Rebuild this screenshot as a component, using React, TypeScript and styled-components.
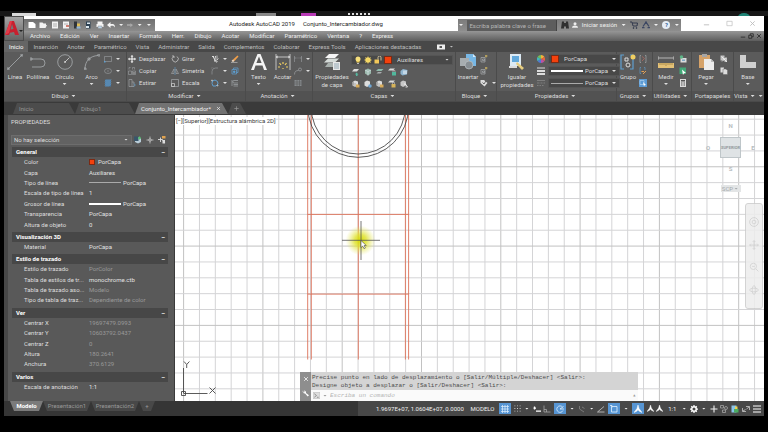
import React from 'react';
import styled, { createGlobalStyle, css } from 'styled-components';

const Global = createGlobalStyle`
  * { box-sizing: border-box; }
  body { margin: 0; background: #000; }
  body, button, input, select { font-family: Roboto, "Noto Sans", sans-serif; font-size: 6px; line-height: 8px; }
  button, input, select { margin: 0; padding: 0; border: 0; background: none; color: inherit; }
  a { color: inherit; text-decoration: none; }
  svg { display: block; flex: none; }
`;

/* ---------- icons ---------- */

const W = '#dcdcdc';
const G = '#a9adb0';
const B = '#5f9fd0';
const Y = '#f0cf62';

const glyphs: Record<string, React.ReactNode> = {
  line: <path d="M1 15L15 1M0 14h2v2H0zM14 0h2v2h-2z" stroke={G} strokeWidth=".8" fill="none" />,
  polyline: <path d="M1 5h10a3.500 3.500 0 0 1 0 8H2M0 4h2v2H0z" stroke={G} strokeWidth=".8" fill="none" />,
  circle: <g fill="none" stroke={G} strokeWidth=".8"><circle cx="8" cy="8" r="7.300" /><path d="M8 8l4.500-4.500M7 8h2M8 7v2" stroke={W} /></g>,
  arc: <g fill="none" stroke={G} strokeWidth=".8"><path d="M1 15C1 7 6 2 14 1.500" /><path d="M0 14h2v2H0zM4 4h2v2H4zM14 0h2v2h-2z" /></g>,
  rect: <g fill="none" stroke={G}><path d="M1 3h14v10H1z" /><path d="M0 12h3v3H0z" fill={B} stroke="none" /></g>,
  ellipse: <g fill="none" stroke={G}><ellipse cx="8" cy="8" rx="7" ry="5" /><path d="M7 8h2M8 7v2" /></g>,
  hatch: <g><path d="M2 1h12v14H2z" fill="#4777a0" /><path d="M2 5l4-4M2 9l8-8M2 13l12-12M4 15L14 5M8 15l6-6" stroke="#8fc0e8" /></g>,
  move: <path d="M8 0l3 3H9v4h4V5l3 3-3 3V9H9v4h2l-3 3-3-3h2V9H3v2L0 8l3-3v2h4V3H5z" fill="#fff" />,
  rotate: <g fill="none" stroke={W} strokeWidth="1.300"><path d="M5 3a6 6 0 1 0 7 0" /><path d="M2 2h4v4" /></g>,
  trim: <g stroke={W} strokeWidth="1.500" fill="none"><path d="M3 2l7 11M9 2L7 13M2 3h4" strokeWidth="2" /><path d="M12 1v9l3-3" /><circle cx="11" cy="13" r="1.500" /></g>,
  eraser: <g><path d="M13 1l2 2-8 9-3-3z" fill="#f2a04a" /><path d="M4 9l3 3-3 2-3-2z" fill="#f8dfc4" /><path d="M0 15h13" stroke={W} /></g>,
  copy: <g fill="none" stroke={G}><path d="M1 8h6v7H1zM9 8h6v7H9zM2 5V1h3M9 5V1h4v4" /><circle cx="12" cy="12" r="1" stroke={W} /></g>,
  mirror: <g fill="none" stroke={G} strokeWidth="1.200"><path d="M8 0v16" stroke={B} /><path d="M6 4v9H1zM10 4v9h5z" /></g>,
  fillet: <g fill="none" stroke={G}><path d="M2 15V9a7 7 0 0 1 7-7h5" /><path d="M1 5V1h4" stroke="#777" /></g>,
  box: <g fill="none" stroke={B} strokeWidth="1.500"><path d="M2 5h9v9H2zM5 5V2h9v9h-3" /><path d="M5 8h3v3H5z" fill={B} /></g>,
  stretch: <g fill="none" stroke={G} strokeWidth="1.200"><path d="M2 1h6v14H2zM8 6h4v9H8" /><path d="M11 9l4 3-4 3" stroke={B} /></g>,
  scale: <g fill="none" stroke={G} strokeWidth="1.300"><path d="M1 1h14v14H1z" /><path d="M1 9h6v6H1z" stroke={W} /></g>,
  array: <g fill="none" stroke={B} strokeWidth="2"><path d="M3 4l5-2 5 3 1 5-4 4H4L2 9z" /><path d="M1 2h2v2H1zM12 12h2v2h-2z" stroke={W} strokeWidth="1" /></g>,
  offset: <g fill="none" stroke={G} strokeWidth="1.300"><path d="M14 3H6a2 2 0 0 0 0 5h8M14 11H5M14 14H5M2 2v12" /></g>,
  text: <path d="M0 16L6.500 0h3L16 16h-3l-1.500-4.500h-7L3 16zM5.400 9h5.200L8 2.500z" fill="#f4f4f4" fillRule="evenodd" />,
  dim: <g fill="none" stroke={W} strokeWidth=".8"><path d="M1 0v16M15 0v16M1 3h14M3 2L1 3l2 1M13 2l2 1-2 1" /><path d="M8 8v2M4.500 9l1.500 2M11.500 9L10 11M3 13h2M11 13h2M8 14v1" stroke={Y} strokeWidth="1.200" /></g>,
  dimSmall: <path d="M1 2v12M15 2v12M1 6h4M11 6h4M7 6h2" stroke={G} fill="none" />,
  leader: <g fill="none" stroke={G} strokeWidth="1.200"><path d="M1 15C1 9 4 7 9 7" /><circle cx="12" cy="5" r="3" /></g>,
  table: <g><path d="M1 2h14v12H1z" fill="#85898c" /><path d="M1 6h14M1 10h14M6 2v12M11 2v12" stroke="#555" /></g>,
  layers: <g><path d="M5 0h10l-4 4H1z" fill="#f5f5f5" /><path d="M4 4.500h11l-4 4H0z" fill="#d6dcd9" /><path d="M4 9h8l-3 4H1z" fill="#a8b0ad" /><path d="M9 8h7v8H9z" fill="#e8e8e8" /><path d="M10 10h5M10 12h5M10 14h5" stroke="#7e9aa8" strokeWidth=".8" /></g>,
  bulb: <g><circle cx="8" cy="6" r="5" fill="#f6df7c" /><path d="M5 10h6v3H5z" fill="#e8c95a" /><path d="M6 14h4v2H6z" fill="#bbb" /></g>,
  sun: <g><circle cx="8" cy="8" r="5.500" fill="#f8df68" /><path d="M8 0v16M0 8h16M2 2l12 12M14 2L2 14" stroke="#f0cf62" /></g>,
  unlock: <g><path d="M1 7h9v8H1z" fill="#f3c85a" /><path d="M8 7V3a3 3 0 0 1 6 0v6" fill="none" stroke="#e6d6a8" strokeWidth="1.700" /></g>,
  la: <g><path d="M4 2h10l-4 5H0z" fill={W} /><path d="M9 9l4 4h-2v3H8v-3H6z" fill="#57b8a0" /></g>,
  lb: <g><path d="M2 4l6-3 6 3v7l-6 4-6-4z" fill="#9dbbae" /><path d="M2 4l6 3 6-3M8 7v8" stroke="#eef" fill="none" /></g>,
  lc: <g><path d="M4 2h11l-4 4H0z" fill="#8fb9ab" /><path d="M4 8h8l-3 3H1z" fill={G} /></g>,
  ld: <g><path d="M4 1h10l-4 4H0z" fill={W} /><path d="M8 8h8v7H8z" fill="#51b89d" /><path d="M10 8V5h4v3" stroke={W} fill="none" /></g>,
  le: <g><path d="M1 6l5-4 9 2-1 9-9 2-4-3z" fill="#8fb5d0" /><path d="M6 5h8v7H6z" fill="#c3d7e5" /></g>,
  lf: <g><path d="M1 4l5-3 6 2v8l-6 3-5-3z" fill={W} /><path d="M8 9h7v6H8z" fill="#d7ab5a" /><path d="M3 4v7M6 6v8" stroke="#777" /></g>,
  lg: <g><path d="M1 4l5-3 6 2v8l-6 3-5-3z" fill={W} /><circle cx="12" cy="12" r="3.500" fill="#70a7d5" /></g>,
  lh: <g><path d="M4 1h10l-4 4H0z" fill={W} /><path d="M7 8h8v7H7z" fill="#d7b45a" /><path d="M9 8V5h4v3" stroke={W} fill="none" /></g>,
  li: <g><path d="M1 4l5-3 6 2v8l-6 3-5-3z" fill="#c7c7c7" /><path d="M8 8h3l4 6M11 14h4" stroke="#fff" strokeWidth="1.500" fill="none" /></g>,
  insert: <g><path d="M6 0h7l3 3v9H6z" fill="#77b7e5" /><path d="M13 0v3h3z" fill="#d5ebfa" /><path d="M0 4h9v8H0z" fill="#a7adb0" /><circle cx="9" cy="11" r="4" fill="#878e93" stroke="#c3c9cd" strokeWidth=".6" /></g>,
  blk: <g fill="none" stroke={G} strokeWidth="1.400"><path d="M2 5h8v9H2zM5 8h4v3H5z" /><path d="M10 2h5M12 0v5" stroke={Y} /></g>,
  tag: <g fill={W}><path d="M1 2h7l7 6-6 7-8-7z" /><path d="M5 7l3 3 5-8" stroke="#666" strokeWidth="2" fill="none" /></g>,
  match: <g><path d="M1 0h11v12H1z" fill="#dceaf4" /><path d="M3 2h7v6H3z" fill="#61a8db" /><path d="M0 12h8v2H0z" fill={W} /><path d="M8 8l7 6-2 2-6-6z" fill="#e6cd7f" /></g>,
  wheel: <g><path d="M8 8V0a8 8 0 0 1 7 4z" fill="#f3b13b" /><path d="M8 8l7-4a8 8 0 0 1 0 8z" fill="#e8663e" /><path d="M8 8l7 4a8 8 0 0 1-7 4z" fill="#bd53a5" /><path d="M8 8v8a8 8 0 0 1-7-4z" fill="#4e79d5" /><path d="M8 8l-7 4a8 8 0 0 1 0-8z" fill="#43b6bd" /><path d="M8 8L1 4a8 8 0 0 1 7-4z" fill="#74c05a" /></g>,
  weights: <path d="M0 1h16v2H0zM0 6h16v4H0zM0 12h16v4H0z" fill={W} />,
  types: <path d="M0 3h16M0 8h5M7 8h4M13 8h3M0 13h3M5 13h3M10 13h3" stroke="#898989" strokeWidth="1.500" />,
  group: <g fill="none"><path d="M4 1H1v14h3M10 1h3v14h-3" stroke={B} strokeWidth="1.200" /><path d="M5 4h3v3H5z" stroke={W} /><circle cx="8" cy="11" r="2" stroke={W} /><circle cx="13" cy="3" r="2.500" fill={Y} /></g>,
  ungroup: <g fill="none" strokeWidth="1.300"><path d="M4 1H2v14h2M12 1h2v14h-2" stroke={G} /><path d="M6 3l5 4-5 5" stroke="#c36b61" /></g>,
  gedit: <g fill="none" strokeWidth="1.300"><path d="M4 1H2v12h2M10 1h2v5" stroke={B} /><path d="M5 9h5M8 14l6-6" stroke="#e4a155" strokeWidth="2" /></g>,
  gsel: <g><path d="M0 0h16v16H0z" fill="#5c9bd5" /><path d="M2 3h8v8H2z" fill="none" stroke="#cde4f7" /><path d="M8 6l6 6-3 .300L10 15z" fill="#fff" /></g>,
  measure: <g><path d="M0 2v4M16 2v4M0 4h16" stroke={W} strokeWidth=".7" /><path d="M0 9h16v5H0z" fill="#e4c176" /><path d="M2 9v2M4 9v2M6 9v2M8 9v3M10 9v2M12 9v2M14 9v2" stroke="#8a6f38" strokeWidth=".6" /></g>,
  u1: <g><path d="M3 6h12v9H3z" fill={W} /><circle cx="5" cy="4" r="3.500" fill="#5db487" /><path d="M6 9h6v3H6z" fill="#7fa8c4" /></g>,
  u2: <g><path d="M1 1h13v13H1z" fill="#43a878" /><path d="M6 5l8 7-4 .500L8 16z" fill="#fff" /></g>,
  calc: <g><path d="M2 0h12v16H2z" fill={W} /><path d="M4 2h8v3H4zM4 7h2v2H4zM7 7h2v2H7zM10 7h2v2h-2zM4 11h2v2H4zM7 11h2v2H7zM10 11h2v2h-2z" fill="#555" /></g>,
  paste: <g><path d="M1 1h11v13H1z" fill="#d5a269" /><path d="M4 0h5v3H4z" fill="#a6a6a6" /><path d="M6 5h7l3 3v8H6z" fill="#ececec" /><path d="M13 5v3h3z" fill="#bcbcbc" /></g>,
  cut: <g><path d="M1 1h8v10H1zM9 6h5v8H9z" fill="#c2c2c2" /><path d="M3 3l11 11M13 4L4 13" stroke="#fff" strokeWidth="1.300" /></g>,
  clip: <g fill={W}><path d="M1 1h7v10H1z" /><path d="M6 4h6l3 3v8H6z" stroke="#666" /></g>,
  base: <path d="M0 1h6v7h10v6H0z" fill="#cfcfcf" />,
  newDoc: <path d="M1 2h9l5 4v8H1z" fill="#fff" />,
  open: <path d="M1 3h6l2 2h5v3l2 0-3 6H1z" fill="#f3f3f3" />,
  save: <g><path d="M2 1h12v14H2z" fill="#f3f3f3" /><path d="M4 6h8M4 10h8" stroke="#999" strokeWidth="1.500" /></g>,
  saveAs: <g><path d="M2 1h12v14H2z" fill="#f3f3f3" /><path d="M4 6h8" stroke="#999" strokeWidth="1.500" /><path d="M8 10h6" stroke="#c75849" strokeWidth="3" /></g>,
  cloud: <g><path d="M2 1h6v14H2z" fill="#30343a" /><path d="M8 5h6v6H8z" fill="#e0bd55" /><path d="M7 11h8v4H7z" fill="#8fb4d8" /></g>,
  cloudUp: <g><path d="M4 1h9v14H4z" fill="#2c4053" /><path d="M6 3h6v3H6zM4 10h6v4H4z" fill="#dbe7ef" /></g>,
  print: <g><path d="M3 1h10v5H3zM1 6h14v6H1z" fill="#f4f4f4" /><path d="M4 10h8v5H4z" fill="#bed4e7" stroke="#888" /></g>,
  undo: <path d="M0 8l7-6v4h5c3 1 4 3 4 7-2-3-4-4-9-3v4z" fill="#f4f4f4" />,
  redo: <path d="M16 8L9 3v3H0v4h9v4z" fill="#aaa" />,
  binoc: <path d="M2 1h4v3h4V1h4l2 14h-6v-4H6v4H0z" fill="#303030" />,
  user: <g fill="#eee"><circle cx="8" cy="4.500" r="4" /><path d="M0 15c0-8 16-8 16 0z" /></g>,
  cart: <g fill="none" stroke="#32394d" strokeWidth="2"><path d="M0 2h4l2 8h8l1-6H5" /><circle cx="7" cy="14" r="1" /><circle cx="13" cy="14" r="1" /></g>,
  share: <path d="M8 2L2 11M8 2l6 9M0 13h5M11 13h5M6 2h4" stroke="#3c4763" strokeWidth="2.500" fill="none" />,
  addSel: <g><path d="M2 5l6-3 6 3v7l-6 3-6-3z" fill="#b8ccd8" /><path d="M0 1h9v9H0z" fill="#39566b" /><path d="M8 4h6M11 1v6" stroke="#5ac074" strokeWidth="2.500" /></g>,
  pick: <path d="M8 1v5M8 10v5M1 8h5M10 8h5M6 6h4v4H6z" stroke={W} fill="none" strokeWidth="1.300" />,
  quick: <g><path d="M0 7h9M5 3v9M7 6l7 8" stroke={W} strokeWidth="1.800" /><path d="M8 0h7v5H8z" fill="#e0a350" /><path d="M9 8h5v7H9z" fill="#ddd" /></g>,
  sgrid: <path d="M0 3h16M0 8h16M0 13h16M3 0v16M8 0v16M13 0v16" stroke="#d9ebfb" strokeWidth="1.500" />,
  sdots: <g fill={W}><path d="M1 1h2v2H1zM7 1h2v2H7zM13 1h2v2h-2zM1 7h2v2H1zM7 7h2v2H7zM13 7h2v2h-2zM1 13h2v2H1zM7 13h2v2H7zM13 13h2v2h-2z" /></g>,
  sdyn: <path d="M1 6h5M3 3v6M6 12h10" stroke="#fff" strokeWidth="2.500" />,
  sortho: <path d="M2 1v13h13M2 9h5v5" stroke="#aaa" strokeWidth="1.500" fill="none" />,
  spolar: <g stroke="#e2f1ff" strokeWidth="1.600" fill="none"><path d="M13 4a6.500 6.500 0 1 0 1 7M8 8l7-5M8 8h8" /></g>,
  siso: <path d="M3 2v6l9 6M8 4l5 3" stroke="#888" strokeWidth="1.500" fill="none" />,
  sangle: <path d="M1 14L14 3M1 14h14" stroke="#ccc" strokeWidth="1.600" />,
  sosnap: <g fill="none" stroke="#e2f1ff" strokeWidth="1.600"><path d="M3 3h11v11H3z" /><path d="M0 1h4v4" /></g>,
  sann: <path d="M8 0l2 7 6 8-6-3-2-3-2 3-6 3 6-8z" fill="#fff" stroke="#fff" />,
  gear: <g><circle cx="8" cy="8" r="4.500" fill="none" stroke="#fff" strokeWidth="3" /><path d="M8 0v3M8 13v3M0 8h3M13 8h3M2.500 2.500l2 2M11.500 11.500l2 2M13.500 2.500l-2 2M4.500 11.500l-2 2" stroke="#fff" strokeWidth="2.500" /></g>,
  plus: <path d="M8 1v14M1 8h14" stroke="currentColor" strokeWidth="2.200" />,
  isolate: <g fill="none" stroke="#aaa" strokeWidth="1.500"><path d="M1 1h6v5H1z" /><circle cx="12" cy="6" r="3" /><path d="M5 10h6v5H5z" /></g>,
  perf: <g><path d="M1 1h10v14H1z" fill="#8ac5e8" /><path d="M6 8h9v7H6z" fill="#4bad62" /><path d="M8 3h5v5H8z" fill="#f0d14e" /></g>,
  full: <path d="M1 13V6M1 13h7M15 3v7M15 3H8M9 8l5-4M7 9l-5 3" stroke={W} strokeWidth="1.400" fill="none" />,
  burger: <path d="M0 2h16M0 8h16M0 14h16" stroke="#fff" strokeWidth="2" />,
  close: <path d="M3 3l10 10M13 3L3 13" stroke="currentColor" strokeWidth="2" />,
  minimize: <path d="M2 11h12" stroke="currentColor" strokeWidth="2" />,
  maximize: <path d="M2 3h12v10H2z" stroke="currentColor" strokeWidth="1.500" fill="none" />,
  restore: <path d="M2 6h8v8H2zM6 6V2h8v8h-4" stroke="currentColor" strokeWidth="2" fill="none" />,
  wrench: <path d="M2 1a5 5 0 0 0 5 7l6 7 3-3-7-5a5 5 0 0 0-5-6l2 3-2 2z" fill="#fff" />,
  prompt: <g><path d="M0 1h16v14H0z" fill="#ddd" stroke="#aaa" /><path d="M3 4l5 4-5 4M9 12h4" fill="none" stroke="#888" strokeWidth="2" /></g>,
  media: <g><path d="M0 3h16v10H0z" fill="#eee" /><path d="M5 6h5v4H5z" fill="#555" /></g>,
  navWheel: <g fill="none" stroke="#cfcfcf" strokeWidth="1.500"><circle cx="8" cy="8" r="7" /><circle cx="8" cy="8" r="3" /></g>,
  navPan: <path d="M8 1v14M1 8h14M6 3l2-2 2 2M6 13l2 2 2-2M3 6L1 8l2 2M13 6l2 2-2 2" fill="none" stroke="#cfcfcf" strokeWidth="1.500" />,
  navZoom: <g fill="none" stroke="#cfcfcf" strokeWidth="1.500"><circle cx="7" cy="7" r="5" /><path d="M11 11l4 4M5 7h4" /></g>,
  navOrbit: <g fill="none" stroke="#cfcfcf" strokeWidth="1.500"><ellipse cx="8" cy="8" rx="7" ry="3" /><ellipse cx="8" cy="8" rx="3" ry="7" /></g>,
};

const Icon = ({ name, size = 8 }: { name: string; size?: number }) => (
  <svg width={size} height={size} viewBox="0 0 16 16" aria-hidden="true">{glyphs[name]}</svg>
);

const Caret = styled.span<{ $wide?: boolean }>`
  display: block;
  flex: none;
  width: 4px;
  height: 2px;
  margin: 0 ${p => (p.$wide ? 3 : 1)}px;
  background: currentColor;
  clip-path: polygon(0 0, 100% 0, 50% 100%);
`;

/* ---------- window frame ---------- */

const Desktop = styled.div`
  height: 100vh;
  min-height: 400px;
  padding: 16px 4px;
  background: #000;
  position: relative;
`;
const Backdrop = styled.svg`
  position: absolute;
  top: 0;
  left: 0;
  width: 100%;
`;
const Frame = styled.div`
  position: relative;
  height: 100%;
  display: flex;
  flex-direction: column;
  background: #3a3a3a;
  color: #dedede;
  white-space: nowrap;
  overflow: hidden;
`;
const Head = styled.header`
  display: grid;
  grid-template-columns: 20px 1fr;
  height: 25px;
  flex: none;
`;
const AppButton = styled.button`
  display: flex;
  align-items: center;
  justify-content: center;
  background: linear-gradient(#a4a4a4, #646464);
  border: 1px solid #4b4b4b;
  color: #222;
`;
const HeadRows = styled.div`
  display: grid;
  grid-template-rows: 15px 10px;
  min-width: 0;
`;
const TitleBar = styled.div`
  display: grid;
  grid-template-columns: 131px 1fr 223px 83px;
  background: #fff;
`;
const QuickBar = styled.div`
  display: flex;
  align-items: center;
  justify-content: space-between;
  margin-top: 3px;
  padding: 0 3px 0 4px;
  background: linear-gradient(#6f6f6f, #8b8b8b);
  color: #eee;
`;
const IconButton = styled.button<{ $on?: boolean }>`
  display: flex;
  align-items: center;
  justify-content: center;
  ${p => p.$on && css`background: #5795d3; height: 11px; padding: 0 2px;`}
`;
const Title = styled.h1`
  margin: 0;
  display: flex;
  align-items: center;
  gap: 8px;
  padding-left: 74px;
  font-size: 6px;
  font-weight: 400;
  color: #222;
`;
const Help = styled.div`
  display: flex;
  align-items: center;
  justify-content: space-between;
  margin-top: 3px;
  padding-right: 1px;
  background: linear-gradient(#7b7b7b, #8d8d8d);
  color: #efefef;
`;
const Search = styled.input`
  width: 90px;
  height: 11px;
  padding: 0 2px;
  background: #5d5d5d;
  border-right: 1px solid #444;
  &::placeholder { color: #b5b5b5; opacity: 1; }
`;
const HelpMark = styled.span`
  width: 8px;
  height: 8px;
  border-radius: 50%;
  background: #e5edf6;
  color: #345f97;
  font-weight: 700;
  text-align: center;
`;
const Controls = styled.div<{ $dark?: boolean }>`
  display: flex;
  align-items: center;
  justify-content: flex-end;
  gap: ${p => (p.$dark ? 2 : 16)}px;
  padding-right: ${p => (p.$dark ? 2 : 8)}px;
  margin-left: auto;
  color: ${p => (p.$dark ? '#222' : '#bbb')};
`;
const MenuBar = styled.nav`
  display: flex;
  align-items: center;
  gap: 10px;
  padding-left: 6px;
  background: linear-gradient(#969696, #5d5d5d);
  color: #eee;
`;

/* ---------- ribbon ---------- */

const Tabs = styled.div`
  display: flex;
  align-items: stretch;
  flex: none;
  height: 11px;
  background: #484848;
  color: #bdbdbd;
`;
const RibbonTab = styled.button<{ $on?: boolean }>`
  padding: 0 5px 0 4px;
  line-height: 11px;
  ${p => p.$on && css`background: #656565; color: #fff; margin-right: 1px; padding-left: 5px;`}
`;
const MediaButton = styled(IconButton)` margin-left: 11px; gap: 3px; `;
const Ribbon = styled.div`
  display: grid;
  grid-template-columns: 123fr 119fr 67fr 143fr 41fr 120fr 36fr 39fr 42fr 30fr;
  height: 50px;
  flex: none;
  background: #5b5b5b;
  border-bottom: 1px solid #4a4a4a;
`;
const Panel = styled.section`
  display: grid;
  grid-template-rows: 1fr 10px;
  min-width: 0;
  border-right: 1px solid #4b4b4b;
`;
const PanelBody = styled.div<{ $cols: string }>`
  display: grid;
  grid-template-columns: ${p => p.$cols};
  padding: 1px 2px 0 0;
  min-width: 0;
  min-height: 0;
`;
const PanelFoot = styled.h2`
  margin: 0;
  display: flex;
  align-items: center;
  justify-content: center;
  background: #525252;
  font-size: 6px;
  font-weight: 400;
`;
const Big = styled.button`
  display: flex;
  flex-direction: column;
  align-items: center;
  min-width: 0;
  padding-top: 1px;
  gap: 2px;
`;
const BigLabel = styled.span`
  display: block;
  margin: 1px -6px 0;
  text-align: center;
`;
const Stack = styled.div`
  display: grid;
  grid-template-rows: repeat(3, 12px);
  align-items: center;
  min-width: 0;
`;
const Tool = styled.button`
  display: flex;
  align-items: center;
  gap: 3px;
`;
const LayerBox = styled.div`
  display: grid;
  grid-template-rows: 13px 12px 12px;
  align-items: center;
`;
const LayerTools = styled.div`
  display: flex;
  gap: 4px;
  padding-left: 1px;
`;
const Combo = styled.label`
  position: relative;
  display: flex;
  align-items: center;
  gap: 2px;
  height: 10px;
  padding: 0 2px;
  background: #484848;
  border: 1px solid #555;
`;
const Select = styled.select`
  appearance: none;
  flex: 1;
  min-width: 0;
  height: 8px;
  outline: 0;
`;
const Swatch = styled.i<{ $size?: number }>`
  flex: none;
  width: ${p => p.$size ?? 8}px;
  height: ${p => p.$size ?? 8}px;
  margin-right: ${p => (p.$size ? 1 : 3)}px;
  background: #f4410d;
  border: 1px solid #7b2a14;
`;
const Stroke = styled.i<{ $thick?: boolean }>`
  flex: none;
  width: 32px;
  height: ${p => (p.$thick ? 2 : 1)}px;
  background: ${p => (p.$thick ? '#fff' : '#aaa')};
`;

/* ---------- documents and workspace ---------- */

const DocTabs = styled.div`
  display: flex;
  align-items: flex-end;
  flex: none;
  height: 13px;
  padding: 0 0 1px 9px;
  background: #3a3a3a;
`;
const DocTab = styled.button<{ $on?: boolean; $w: number }>`
  display: flex;
  align-items: center;
  justify-content: space-between;
  width: ${p => p.$w}px;
  height: 11px;
  padding: 0 7px 0 6px;
  background: ${p => (p.$on ? '#727272' : '#4c4c4c')};
  color: ${p => (p.$on ? '#f2f2f2' : '#979797')};
  clip-path: polygon(4px 0, calc(100% - 6px) 0, 100% 100%, 0 100%);
`;
const Work = styled.div`
  display: grid;
  grid-template-columns: 170px 1fr;
  column-gap: 1px;
  flex: 1;
  min-height: 0;
`;
const Palette = styled.aside`
  display: flex;
  flex-direction: column;
  min-height: 0;
  padding: 0 6px 9px 4px;
  background: #595959;
  border-left: 4px solid #474747;
`;
const PaletteTitle = styled.h2`
  margin: 2px 0 0 -1px;
  height: 17px;
  font-size: 6px;
  font-weight: 400;
  line-height: 9px;
`;
const PaletteTop = styled.div`
  display: grid;
  grid-template-columns: 1fr repeat(3, 12px);
  align-items: center;
  height: 11px;
  flex: none;
`;
const Selection = styled(Combo)`
  margin-left: -1px;
  background: #626262;
  border-color: #6d6d6d;
`;
const Props = styled.div`
  display: flex;
  flex-direction: column;
  flex: 1;
  min-height: 0;
`;
const GroupHead = styled.button`
  display: flex;
  flex: none;
  align-items: center;
  justify-content: space-between;
  height: 10px;
  margin-top: 2px;
  padding: 0 3px 0 4px;
  background: #474747;
  color: #fff;
  font-weight: 700;
`;
const PropRow = styled.div<{ $dim?: boolean }>`
  display: grid;
  grid-template-columns: 61px 1fr;
  column-gap: 4px;
  align-items: center;
  flex: 1 1 0;
  min-height: 0;
  padding-left: 12px;
  & > span:last-child { color: ${p => (p.$dim ? '#999' : '#e2e2e2')}; }
`;
const Value = styled.span`
  display: flex;
  align-items: center;
  gap: 2px;
`;

const Canvas = styled.main`
  position: relative;
  overflow: hidden;
  background: #fff;
  min-width: 0;
`;
const Sheet = styled.svg`
  position: absolute;
  inset: 0;
  width: 100%;
  height: 100%;
`;
const ViewLabel = styled.span`
  position: absolute;
  top: 2px;
  left: 1px;
  color: #3c3c3c;
  background: #fff;
`;
const Compass = styled.div`
  position: absolute;
  top: 6px;
  right: 5px;
  display: grid;
  grid-template-columns: 12px 21px 12px;
  grid-template-rows: 10px 33px 10px 18px;
  column-gap: 6px;
  align-items: center;
  justify-items: center;
  color: #b6bcc0;
  font-weight: 700;
`;
const Mid = styled.span` grid-column: 2; `;
const West = styled.span` grid-column: 1; `;
const Cube = styled.button`
  width: 21px;
  height: 21px;
  border: 1px solid #bfc6c9;
  background: #dfe3e5;
  color: #93999c;
  font-size: 4px;
  font-weight: 700;
`;
const Ucs = styled.button`
  grid-column: 2;
  display: flex;
  align-items: center;
  justify-content: center;
  align-self: end;
  width: 20px;
  height: 7px;
  background: #e3e5e6;
  color: #a4a9ac;
`;
const NavBar = styled.div`
  position: absolute;
  top: 88px;
  right: 1px;
  width: 18px;
  height: 106px;
  display: flex;
  flex-direction: column;
  align-items: center;
  justify-content: space-evenly;
  background: #ededed;
  border: 1px solid #ccc;
  border-radius: 3px;
  opacity: .85;
`;
const Command = styled.div`
  position: absolute;
  left: 125px;
  bottom: 0;
  width: 338px;
  display: grid;
  grid-template-columns: 11px 1fr;
  font-family: "Liberation Mono", monospace;
  color: #4c4c4c;
`;
const CommandSide = styled.div`
  display: flex;
  flex-direction: column;
  align-items: center;
  justify-content: space-around;
  background: #8e8e8e;
  color: #fff;
`;
const History = styled.pre`
  margin: 0;
  padding: 2px 1px 0;
  height: 18px;
  font: inherit;
  line-height: 8px;
  background: #d4d4d4;
`;
const Prompt = styled.label`
  display: flex;
  align-items: center;
  gap: 2px;
  height: 11px;
  padding: 0 2px;
  background: #fafafa;
  color: #999;
`;
const PromptInput = styled.input`
  flex: 1;
  font-family: inherit;
  font-style: italic;
  &::placeholder { color: #b4b4b4; opacity: 1; }
`;

/* ---------- status bar ---------- */

const Status = styled.footer`
  display: flex;
  justify-content: space-between;
  flex: none;
  height: 15px;
  background: #353535;
`;
const Layouts = styled.div`
  display: flex;
  padding-left: 6px;
`;
const LayoutTab = styled.button<{ $on?: boolean; $w: number }>`
  width: ${p => p.$w}px;
  height: 10px;
  background: ${p => (p.$on ? '#7b7b7b' : '#484848')};
  color: ${p => (p.$on ? '#fff' : '#999')};
  font-weight: ${p => (p.$on ? 700 : 400)};
  clip-path: polygon(0 0, 100% 0, calc(100% - 4px) 100%, 4px 100%);
`;
const StatusTools = styled.div`
  display: flex;
  align-items: center;
  justify-content: space-between;
  width: 406px;
  padding: 0 3px 0 16px;
  background: #484848;
  color: #f0f0f0;
`;
const StatusText = styled.button`
  padding: 0 2px;
`;

const ribbonTabs = ['Inicio', 'Inserción', 'Anotar', 'Paramétrico', 'Vista', 'Administrar', 'Salida', 'Complementos', 'Colaborar', 'Express Tools', 'Aplicaciones destacadas'];
const menus = ['Archivo', 'Edición', 'Ver', 'Insertar', 'Formato', 'Herr.', 'Dibujo', 'Acotar', 'Modificar', 'Paramétrico', 'Ventana', '?', 'Express'];

const RibbonPanel = ({ title, cols, children, caret = true, end }: { title: string; cols: string; children: React.ReactNode; caret?: boolean; end?: boolean }) => (
  <Panel>
    <PanelBody $cols={cols}>{children}</PanelBody>
    <PanelFoot>{title}{caret && <Caret $wide />}{end && <Caret />}</PanelFoot>
  </Panel>
);

const BigTool = ({ icon, label, second, caret }: { icon: string; label: string; second?: string; caret?: boolean }) => (
  <Big>
    <Icon name={icon} size={16} />
    <BigLabel>{label}{second && <><br />{second}</>}</BigLabel>
    {caret && <Caret />}
  </Big>
);

const Tools = ({ items, carets = [] }: { items: [string, string?][]; carets?: number[] }) => (
  <Stack>
    {items.map(([icon, label], i) => (
      <Tool key={icon + i} aria-label={label ?? icon}>
        <Icon name={icon} />{label}{carets.includes(i) && <Caret />}
      </Tool>
    ))}
  </Stack>
);

type Row = { label: string; value: string; dim?: boolean; mark?: 'color' | 'thin' | 'thick' };
const groups: { title: string; rows: Row[] }[] = [
  { title: 'General', rows: [
    { label: 'Color', value: 'PorCapa', mark: 'color' },
    { label: 'Capa', value: 'Auxiliares' },
    { label: 'Tipo de línea', value: 'PorCapa', mark: 'thin' },
    { label: 'Escala de tipo de línea', value: '1' },
    { label: 'Grosor de línea', value: 'PorCapa', mark: 'thick' },
    { label: 'Transparencia', value: 'PorCapa' },
    { label: 'Altura de objeto', value: '0' },
  ] },
  { title: 'Visualización 3D', rows: [{ label: 'Material', value: 'PorCapa' }] },
  { title: 'Estilo de trazado', rows: [
    { label: 'Estilo de trazado', value: 'PorColor', dim: true },
    { label: 'Tabla de estilos de tr...', value: 'monochrome.ctb' },
    { label: 'Tabla de trazado aso...', value: 'Modelo', dim: true },
    { label: 'Tipo de tabla de traz...', value: 'Dependiente de color', dim: true },
  ] },
  { title: 'Ver', rows: [
    { label: 'Centrar X', value: '19697479.0993', dim: true },
    { label: 'Centrar Y', value: '10603792.0437', dim: true },
    { label: 'Centrar Z', value: '0', dim: true },
    { label: 'Altura', value: '180.2641', dim: true },
    { label: 'Anchura', value: '370.6129', dim: true },
  ] },
  { title: 'Varios', rows: [{ label: 'Escala de anotación', value: '1:1' }] },
];

const PITCH = 15.86;
const gridLines = Array.from({ length: 120 }, (_, i) => i);

const Drawing = () => (
  <Sheet aria-label="Dibujo">
    <defs>
      <radialGradient id="glow">
        <stop offset="0" stopColor="#d6dc00" />
        <stop offset=".4" stopColor="#dfe22c" stopOpacity=".8" />
        <stop offset="1" stopColor="#e6e66a" stopOpacity="0" />
      </radialGradient>
    </defs>
    {gridLines.map(i => (
      <line key={`v${i}`} x1={8.6 + i * PITCH} x2={8.6 + i * PITCH} y1="0" y2="100%" stroke={i % 5 === 0 ? '#c2c2c2' : '#d4d4d6'} />
    ))}
    {gridLines.map(i => (
      <line key={`h${i}`} y1={4.2 + i * PITCH} y2={4.2 + i * PITCH} x1="0" x2="100%" stroke={i % 5 === 3 ? '#c2c2c2' : '#d4d4d6'} />
    ))}
    <g stroke="#dc7058" fill="none" strokeWidth=".9">
      <path d="M132.700 0v244.500M136.300 0v244.500M183.300 0v244.500M230.400 0v244.500M233.600 0v244.500M132.700 99.400h101M132.700 179.100h101" />
    </g>
    <g stroke="#4a4a4a" fill="none" strokeWidth=".9">
      <circle cx="183.200" cy="-8" r="50.300" />
      <circle cx="183.200" cy="-8" r="47" />
    </g>
    <circle cx="185.500" cy="125.500" r="15" fill="url(#glow)" />
    <path d="M167 125.300h38M186 106v39" stroke="#555" strokeWidth=".8" />
    <path d="M186 125.500v7l1.700-1.400 1.400 2.600 1.300-.700-1.300-2.500h2.200z" fill="#fff" stroke="#444" strokeWidth=".6" />
    <g stroke="#484848" fill="none" strokeWidth=".9">
      <path d="M8.500 253v25M8.500 278.500h24M6.500 276.500h4v4h-4z" />
      <path d="M9 246.500l2.700 3 2.700-3M11.700 249.500v3.500M34.500 272.500l6 6M40.500 272.500l-6 6" />
    </g>
  </Sheet>
);

export default function App() {
  return (
    <Desktop>
      <Global />
      <Backdrop height="16" aria-hidden="true">
        <path d="M0 11h768v5H0z" fill="#171717" />
        <path d="M12 13h24v3H12z" fill="#d9d9d9" />
        <path d="M256 13h20v3h-20z" fill="#888" />
        <path d="M301 13h15v3h-15z" fill="#b83ab6" />
        <path d="M348 14h24" stroke="#ddd" strokeWidth="2" strokeDasharray="2 2" />
        <ellipse cx="744" cy="17" rx="6" ry="4" fill="#1f8476" />
      </Backdrop>
      <Frame>
        <Head>
          <AppButton aria-label="Menú de la aplicación">
            <svg width="18" height="19" viewBox="0 0 18 19">
              <path d="M0 16L5 2h4l5 14h-4l-1-3-4 .800L4 16z" fill="#c8202f" />
              <path d="M5.500 10.500L7 5l1.500 5z" fill="#777" />
              <path d="M5 2L0 16l4-2 3-12z" fill="#e33a48" />
              <path d="M14 11h4l-2 2z" fill="#222" />
            </svg>
          </AppButton>
          <HeadRows>
            <TitleBar>
              <QuickBar>
                {['newDoc', 'open', 'save', 'saveAs', 'cloud', 'cloudUp', 'print', 'undo'].map(n => <IconButton key={n} aria-label={n}><Icon name={n} /></IconButton>)}
                <Caret /><IconButton aria-label="Rehacer"><Icon name="redo" size={6} /></IconButton><Caret /><Caret />
              </QuickBar>
              <Title><span>Autodesk AutoCAD 2019</span><span>Conjunto_Intercambiador.dwg</span></Title>
              <Help>
                <Caret />
                <Search aria-label="Buscar" placeholder="Escriba palabra clave o frase" />
                <IconButton aria-label="Buscar"><Icon name="binoc" /></IconButton>
                <IconButton aria-label="Usuario"><Icon name="user" size={6} /></IconButton>
                <a href="#sesion">Iniciar sesión</a>
                <Caret />
                <IconButton aria-label="Tienda"><Icon name="cart" /></IconButton>
                <IconButton aria-label="Compartir"><Icon name="share" /></IconButton>
                <Caret />
                <HelpMark>?</HelpMark>
                <Caret />
              </Help>
              <Controls>
                {['minimize', 'maximize', 'close'].map(n => <IconButton key={n} aria-label={n}><Icon name={n} size={7} /></IconButton>)}
              </Controls>
            </TitleBar>
            <MenuBar>
              {menus.map(m => <a href="#menu" key={m}>{m}</a>)}
              <Controls $dark>
                {['minimize', 'restore', 'close'].map(n => <IconButton key={n} aria-label={n}><Icon name={n} size={6} /></IconButton>)}
              </Controls>
            </MenuBar>
          </HeadRows>
        </Head>

        <Tabs>
          {ribbonTabs.map((t, i) => <RibbonTab key={t} $on={i === 0}>{t}</RibbonTab>)}
          <MediaButton aria-label="Cinta"><Icon name="media" /><Caret /></MediaButton>
        </Tabs>

        <Ribbon>
          <RibbonPanel title="Dibujo" cols="22px 24px 29px 25px 1fr">
            <BigTool icon="line" label="Línea" />
            <BigTool icon="polyline" label="Polilínea" />
            <BigTool icon="circle" label="Círculo" caret />
            <BigTool icon="arc" label="Arco" caret />
            <Tools items={[['rect'], ['ellipse'], ['hatch']]} carets={[0, 1, 2]} />
          </RibbonPanel>
          <RibbonPanel title="Modificar" cols="1px 43px 40px 20px 1fr">
            <span />
            <Tools items={[['move', 'Desplazar'], ['copy', 'Copiar'], ['stretch', 'Estirar']]} />
            <Tools items={[['rotate', 'Girar'], ['mirror', 'Simetría'], ['scale', 'Escala']]} />
            <Tools items={[['trim'], ['fillet'], ['array']]} carets={[0, 1, 2]} />
            <Tools items={[['eraser'], ['box'], ['offset']]} />
          </RibbonPanel>
          <RibbonPanel title="Anotación" cols="25px 23px 1fr">
            <BigTool icon="text" label="Texto" caret />
            <BigTool icon="dim" label="Acotar" />
            <Tools items={[['dimSmall'], ['leader'], ['table']]} carets={[0, 1]} />
          </RibbonPanel>
          <RibbonPanel title="Capas" cols="38px 1fr">
            <BigTool icon="layers" label="Propiedades" second="de capa" />
            <LayerBox>
              <Combo>
                <Icon name="bulb" /><Icon name="sun" /><Icon name="unlock" /><Swatch />
                <Select aria-label="Capa"><option>Auxiliares</option></Select><Caret />
              </Combo>
              <LayerTools>{['la', 'lb', 'lc', 'ld', 'le'].map(n => <IconButton key={n} aria-label={n}><Icon name={n} /></IconButton>)}</LayerTools>
              <LayerTools>{['lf', 'lg', 'lf', 'lh', 'li'].map((n, i) => <IconButton key={i} aria-label={n}><Icon name={n} /></IconButton>)}</LayerTools>
            </LayerBox>
          </RibbonPanel>
          <RibbonPanel title="Bloque" cols="24px 1fr">
            <BigTool icon="insert" label="Insertar" />
            <Tools items={[['blk'], ['blk'], ['tag']]} carets={[2]} />
          </RibbonPanel>
          <RibbonPanel title="Propiedades" cols="40px 11px 1fr">
            <BigTool icon="match" label="Igualar" second="propiedades" />
            <Tools items={[['wheel'], ['weights'], ['types']]} />
            <Stack>
              <Combo><Swatch /><Select aria-label="Color"><option>PorCapa</option></Select><Caret /></Combo>
              <Combo><Stroke $thick /><Select aria-label="Grosor de línea"><option>PorCapa</option></Select><Caret /></Combo>
              <Combo><Stroke /><Select aria-label="Tipo de línea"><option>PorCapa</option></Select><Caret /></Combo>
            </Stack>
          </RibbonPanel>
          <RibbonPanel title="Grupos" cols="22px 1fr">
            <BigTool icon="group" label="Grupo" />
            <Tools items={[['ungroup'], ['gedit'], ['gsel']]} />
          </RibbonPanel>
          <RibbonPanel title="Utilidades" cols="26px 1fr">
            <BigTool icon="measure" label="Medir" caret />
            <Tools items={[['u1'], ['u2'], ['calc']]} />
          </RibbonPanel>
          <RibbonPanel title="Portapapeles" cols="28px 1fr" caret={false}>
            <BigTool icon="paste" label="Pegar" caret />
            <Tools items={[['cut'], ['clip']]} />
          </RibbonPanel>
          <RibbonPanel title="Vista" cols="1fr" end>
            <BigTool icon="base" label="Base" caret />
          </RibbonPanel>
        </Ribbon>

        <DocTabs>
          <DocTab $w={62}>Inicio</DocTab>
          <DocTab $w={60}>Dibujo1</DocTab>
          <DocTab $w={93} $on>Conjunto_Intercambiador*<Icon name="close" size={5} /></DocTab>
          <DocTab $w={18} aria-label="Nuevo dibujo"><Icon name="plus" size={5} /></DocTab>
        </DocTabs>

        <Work>
          <Palette>
            <PaletteTitle>PROPIEDADES</PaletteTitle>
            <PaletteTop>
              <Selection>
                <Select aria-label="Selección"><option>No hay selección</option></Select><Caret />
              </Selection>
              {['addSel', 'pick', 'quick'].map(n => <IconButton key={n} aria-label={n}><Icon name={n} /></IconButton>)}
            </PaletteTop>
            <Props>
              {groups.map(g => (
                <React.Fragment key={g.title}>
                  <GroupHead>{g.title}<span>–</span></GroupHead>
                  {g.rows.map(r => (
                    <PropRow key={r.label} $dim={r.dim}>
                      <span>{r.label}</span>
                      <Value>
                        {r.mark === 'color' && <Swatch $size={6} />}
                        {(r.mark === 'thin' || r.mark === 'thick') && <Stroke $thick={r.mark === 'thick'} />}
                        {r.value}
                      </Value>
                    </PropRow>
                  ))}
                </React.Fragment>
              ))}
            </Props>
          </Palette>
          <Canvas>
            <Drawing />
            <ViewLabel>[−][Superior][Estructura alámbrica 2D]</ViewLabel>
            <Compass>
              <Mid>N</Mid>
              <West>O</West><Cube>SUPERIOR</Cube><span>E</span>
              <Mid>S</Mid>
              <Ucs>SCP<Caret /></Ucs>
            </Compass>
            <NavBar>
              {['navWheel', 'navPan', 'navZoom', 'navOrbit'].map(n => <IconButton key={n} aria-label={n}><Icon name={n} size={10} /></IconButton>)}
            </NavBar>
            <Command>
              <CommandSide><Icon name="close" size={6} /><Icon name="wrench" size={7} /></CommandSide>
              <div>
                <History>{'Precise punto en lado de desplazamiento o [Salir/Múltiple/Deshacer] <Salir>:\nDesigne objeto a desplazar o [Salir/Deshacer] <Salir>:'}</History>
                <Prompt><Icon name="prompt" size={7} /><Caret /><PromptInput aria-label="Comando" placeholder="Escriba un comando" />▴</Prompt>
              </div>
            </Command>
          </Canvas>
        </Work>

        <Status>
          <Layouts>
            <LayoutTab $w={33} $on>Modelo</LayoutTab>
            <LayoutTab $w={48}>Presentación1</LayoutTab>
            <LayoutTab $w={48}>Presentación2</LayoutTab>
            <LayoutTab $w={16}>+</LayoutTab>
          </Layouts>
          <StatusTools>
            <StatusText>1.9697E+07, 1.0604E+07, 0.0000</StatusText>
            <StatusText>MODELO</StatusText>
            <IconButton $on aria-label="Rejilla"><Icon name="sgrid" /></IconButton>
            <IconButton aria-label="Forzcursor"><Icon name="sdots" size={7} /></IconButton><Caret />
            <IconButton aria-label="Entrada dinámica"><Icon name="sdyn" /></IconButton>
            <IconButton aria-label="Orto"><Icon name="sortho" /></IconButton>
            <IconButton $on aria-label="Polar"><Icon name="spolar" /></IconButton><Caret />
            <IconButton aria-label="Isométrico"><Icon name="siso" /></IconButton><Caret />
            <IconButton aria-label="Rastreo"><Icon name="sangle" /></IconButton>
            <IconButton $on aria-label="Referencia"><Icon name="sosnap" /></IconButton><Caret />
            <IconButton $on aria-label="Anotación"><Icon name="sann" /></IconButton>
            <IconButton aria-label="Autoescala"><Icon name="sann" size={7} /></IconButton>
            <IconButton aria-label="Visibilidad"><Icon name="sann" size={7} /></IconButton>
            <StatusText>1:1</StatusText><Caret />
            <IconButton aria-label="Configuración"><Icon name="gear" /></IconButton><Caret />
            <IconButton aria-label="Añadir"><Icon name="plus" /></IconButton>
            <IconButton aria-label="Aislar"><Icon name="isolate" /></IconButton>
            <IconButton aria-label="Rendimiento"><Icon name="perf" /></IconButton>
            <IconButton aria-label="Pantalla completa"><Icon name="full" /></IconButton>
            <IconButton aria-label="Personalizar"><Icon name="burger" /></IconButton>
          </StatusTools>
        </Status>
      </Frame>
    </Desktop>
  );
}
